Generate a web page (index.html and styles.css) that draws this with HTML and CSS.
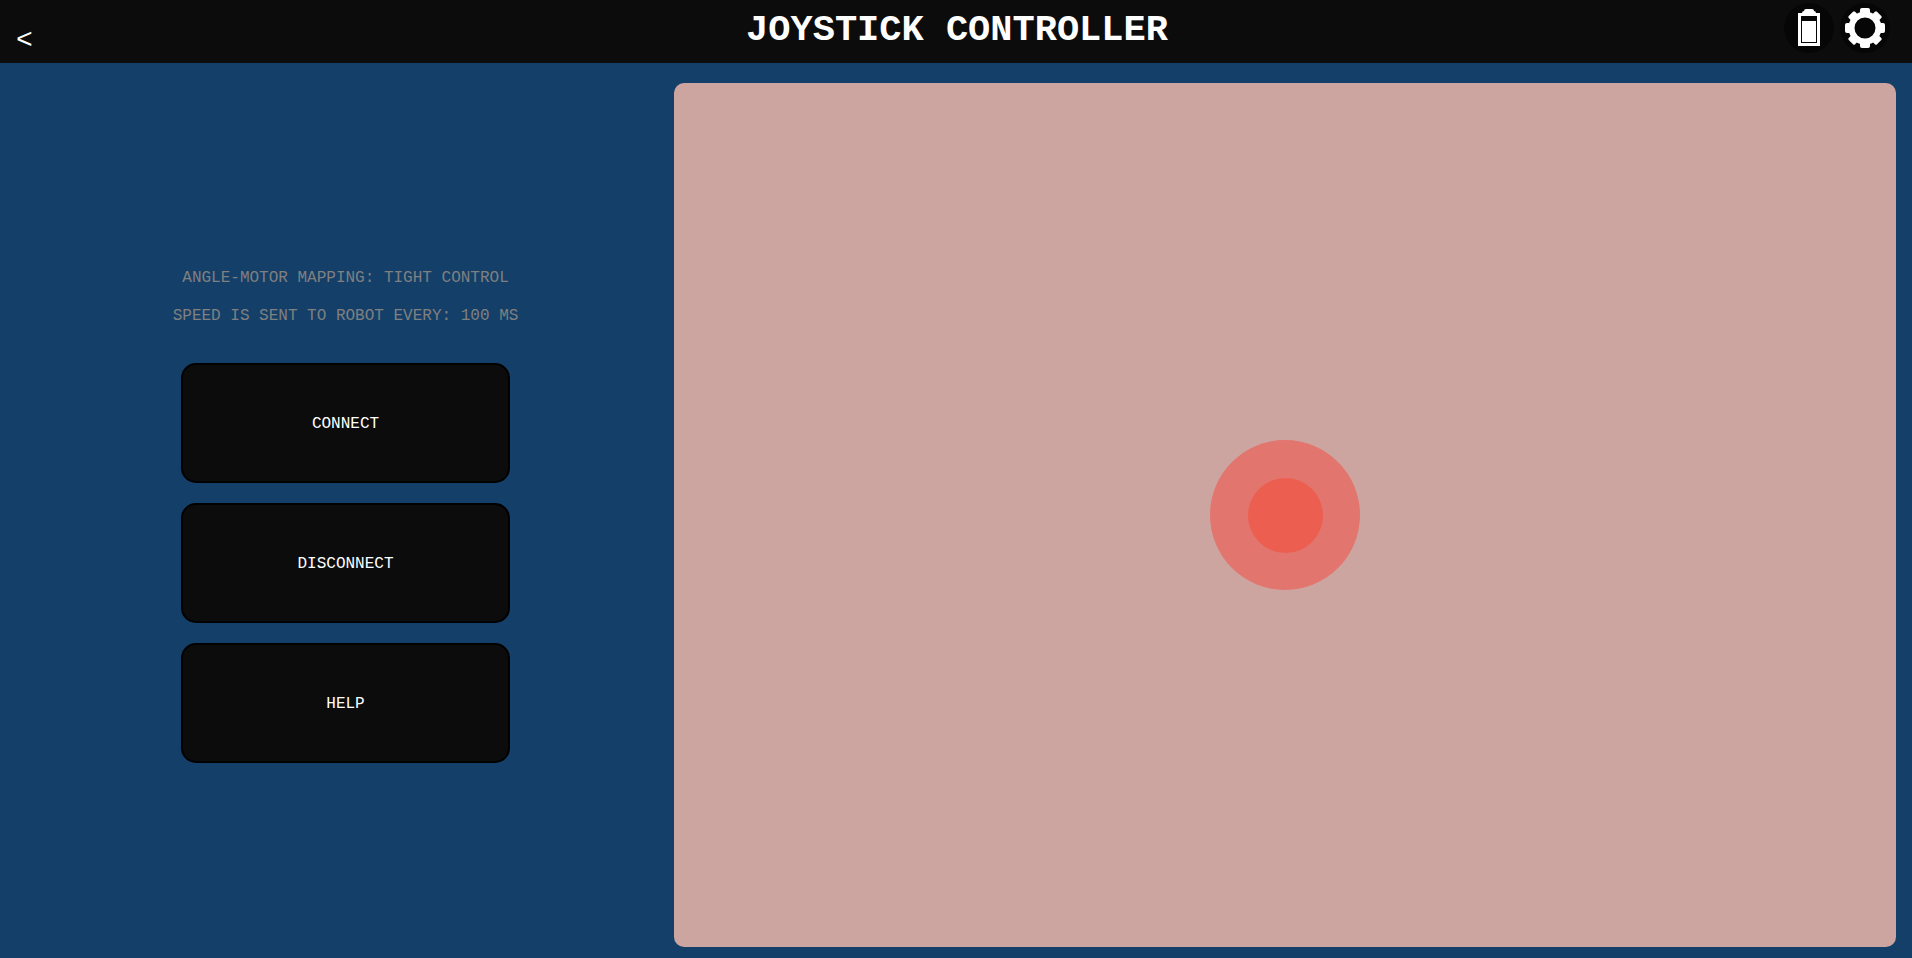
FILE: index.html
```html
<!DOCTYPE html>
<html lang="en">
<head>
<meta charset="utf-8">
<meta name="viewport" content="width=device-width, initial-scale=1">
<title>Joystick Controller</title>
<link rel="stylesheet" href="styles.css">
</head>
<body>
<header class="topbar">
  <a class="back" href="#" aria-label="Back">&lt;</a>
  <h1 class="title">JOYSTICK CONTROLLER</h1>
  <div class="actions">
    <button class="round" type="button" aria-label="Battery">
      <svg viewBox="0 0 50 50" width="50" height="50" aria-hidden="true">
        <path fill="#fff" d="M14 10h4q0-2 2-2q0-2 2-2h6q2 0 2 2q2 0 2 2h4v33H14z"/>
        <path fill="#060606" d="M17 13h16v27H17z"/>
        <path fill="#fff" d="M18 18h14v21H18z"/>
      </svg>
    </button>
    <button class="round" type="button" aria-label="Settings">
      <svg viewBox="0 0 50 50" width="50" height="50" aria-hidden="true">
        <circle cx="25" cy="25" r="13.5" fill="none" stroke="#fff" stroke-width="6"/>
        <g fill="#fff">
          <path id="tooth" d="M20 12V7q0-2 2-2h6q2 0 2 2v5z"/>
          <use href="#tooth" transform="rotate(90 25 25)"/>
          <use href="#tooth" transform="rotate(180 25 25)"/>
          <use href="#tooth" transform="rotate(270 25 25)"/>
          <g transform="rotate(45 25 25)">
            <path id="corner" d="M20.500 12V6.500q0-1.500 1.500-1.500h6q1.500 0 1.500 1.500V12z"/>
            <use href="#corner" transform="rotate(90 25 25)"/>
            <use href="#corner" transform="rotate(180 25 25)"/>
            <use href="#corner" transform="rotate(270 25 25)"/>
          </g>
        </g>
      </svg>
    </button>
  </div>
</header>
<main class="layout">
  <section class="controls">
    <p class="info">ANGLE-MOTOR MAPPING: TIGHT CONTROL</p>
    <p class="info">SPEED IS SENT TO ROBOT EVERY: 100 MS</p>
    <div class="buttons">
      <button class="btn" type="button">CONNECT</button>
      <button class="btn" type="button">DISCONNECT</button>
      <button class="btn" type="button">HELP</button>
    </div>
  </section>
  <section class="pad" aria-label="Joystick area">
    <div class="stick"><div class="knob"></div></div>
  </section>
</main>
</body>
</html>
```
FILE: styles.css
```css
* {
  box-sizing: border-box;
}

body {
  margin: 0;
  min-height: 100vh;
  display: flex;
  flex-direction: column;
  background: #133f69;
  color: #fff;
  font-family: "Liberation Mono", monospace;
  font-size: 16px;
}

.topbar {
  display: grid;
  grid-template-columns: 1fr auto 1fr;
  padding: 3px 22px 6px 16px;
  background: #0c0c0c;
}

.back {
  align-self: end;
  justify-self: start;
  color: #fff;
  font-size: 28px;
  line-height: 32px;
  text-decoration: none;
}

.title {
  margin: 0;
  padding-left: 8px;
  font-size: 37px;
  line-height: 54px;
  font-weight: 700;
}

.actions {
  display: flex;
  justify-content: flex-end;
  gap: 6px;
}

.round {
  width: 50px;
  height: 50px;
  padding: 0;
  border: 0;
  border-radius: 50%;
  background: #060606;
}

.round svg {
  display: block;
}

.layout {
  flex: 1;
  display: flex;
  padding: 20px 16px 11px 0;
}

.controls {
  flex: 0 0 35.55%;
  display: flex;
  flex-direction: column;
  align-items: center;
  justify-content: center;
  gap: 16px;
  padding: 0 0 0 17px;
}

.info {
  margin: 0;
  color: #808080;
  line-height: 22px;
}

.buttons {
  width: 50%;
  display: flex;
  flex-direction: column;
  gap: 20px;
  margin-top: 20px;
}

.btn {
  height: 120px;
  padding: 2px 0 0;
  border: 2px solid #000;
  border-radius: 15px;
  background: #0c0c0c;
  color: #fff;
  font: inherit;
}

.pad {
  flex: 1;
  display: flex;
  align-items: center;
  justify-content: center;
  border-radius: 10px;
  background: #cda5a0;
}

.stick {
  width: 150px;
  height: 150px;
  display: flex;
  align-items: center;
  justify-content: center;
  border-radius: 50%;
  background: #e2756d;
}

.knob {
  width: 75px;
  height: 75px;
  border-radius: 50%;
  background: #ec5f50;
}
```
